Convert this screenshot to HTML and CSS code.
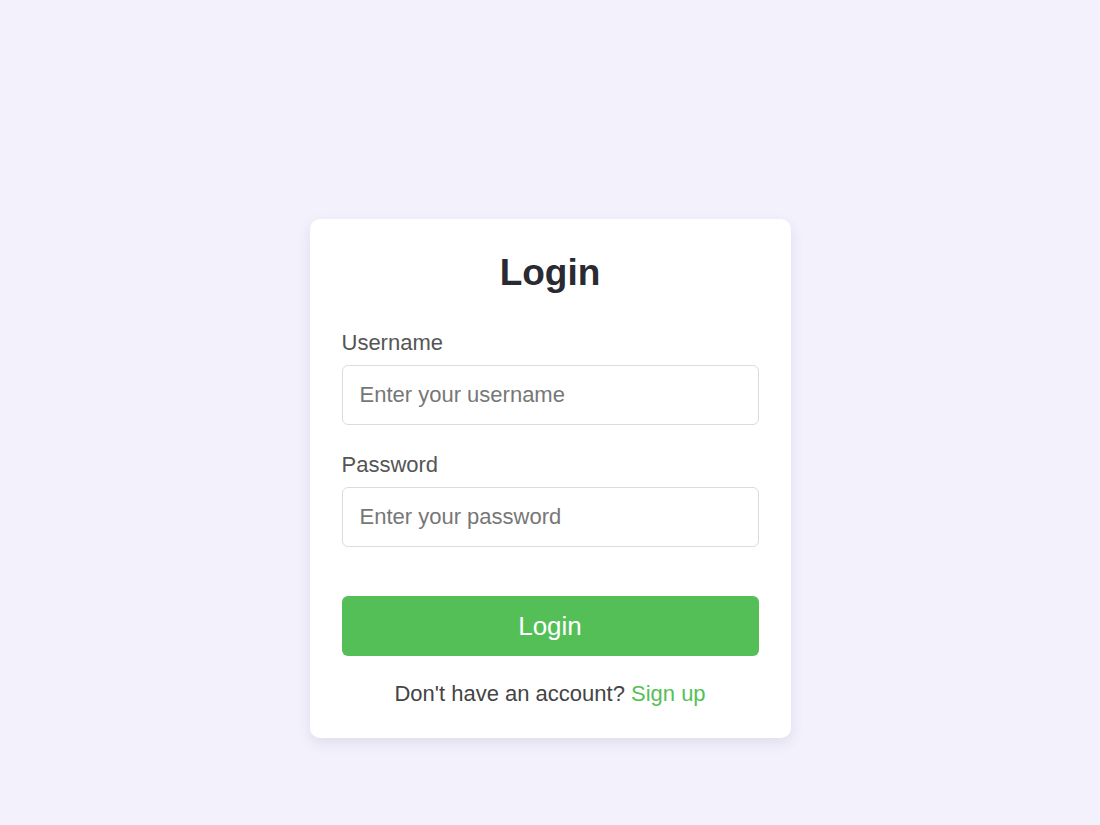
FILE: index.html
```html
<!DOCTYPE html>
<html lang="en">
<head>
<meta charset="utf-8">
<title>Login</title>
<link rel="stylesheet" href="styles.css">
</head>
<body>
  <main class="page">
    <form class="card" onsubmit="return false;">
      <h2 class="title">Login</h2>
      <div class="field">
        <label class="label" for="username">Username</label>
        <input class="input" id="username" type="text" placeholder="Enter your username">
      </div>
      <div class="field">
        <label class="label" for="password">Password</label>
        <input class="input" id="password" type="password" placeholder="Enter your password">
      </div>
      <button class="btn" type="submit">Login</button>
      <p class="signup">Don't have an account? <a class="signup-link" href="#">Sign up</a></p>
    </form>
  </main>
</body>
</html>
```

FILE: styles.css
```css
* {
  box-sizing: border-box;
}

html, body {
  margin: 0;
  padding: 0;
}

body {
  background: #f3f1fc;
  font-family: "Liberation Sans", Arial, sans-serif;
  min-height: 100vh;
}

.page {
  display: flex;
  justify-content: center;
  padding-top: 219px;
}

.card {
  width: 481px;
  background: #ffffff;
  border-radius: 10px;
  box-shadow: 0 5px 14px rgba(60, 50, 110, 0.10);
  padding: 33px 32px 32px;
  display: flex;
  flex-direction: column;
}

.title {
  margin: 0 0 36px;
  text-align: center;
  font-size: 37px;
  line-height: 42px;
  font-weight: 700;
  color: #2a2a33;
}

.field {
  display: flex;
  flex-direction: column;
  gap: 10px;
  margin-bottom: 27px;
}

.label {
  font-size: 22px;
  line-height: 25px;
  color: #555555;
}

.input {
  height: 60px;
  width: 100%;
  border: 1px solid #dcdcdc;
  border-radius: 6px;
  padding: 0 17px;
  font-family: "Liberation Sans", Arial, sans-serif;
  font-size: 22px;
  color: #333;
  background: #fff;
  outline: none;
}

.input::placeholder {
  color: #777777;
}

.btn {
  margin-top: 22px;
  height: 60px;
  width: 100%;
  border: none;
  border-radius: 6px;
  background: #55bf57;
  color: #ffffff;
  font-family: "Liberation Sans", Arial, sans-serif;
  font-size: 26px;
  cursor: pointer;
}

.signup {
  margin: 25px 0 0;
  text-align: center;
  font-size: 22px;
  line-height: 25px;
  color: #444444;
}

.signup-link {
  color: #55bf57;
  text-decoration: none;
}
```
